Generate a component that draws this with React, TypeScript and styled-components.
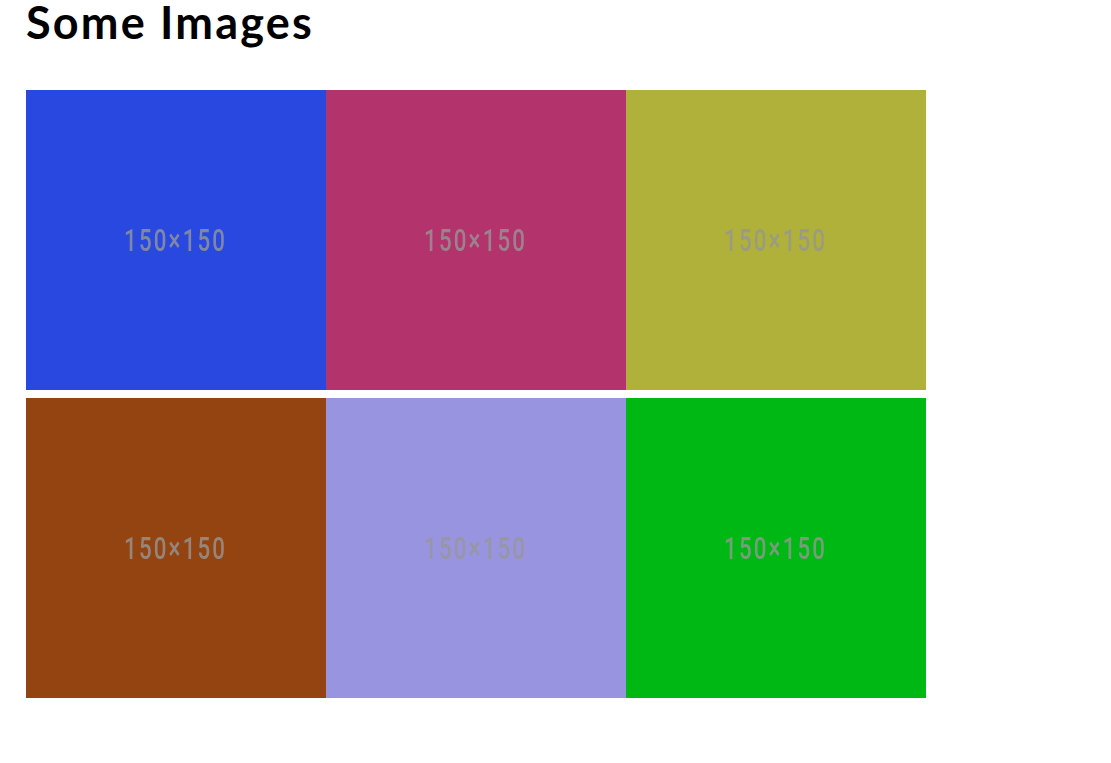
import React from "react";
import styled, { createGlobalStyle } from "styled-components";

const Global = createGlobalStyle`
  html, body { margin: 0; padding: 0; background: #ffffff; }
  body { font-family: "Lato", "DejaVu Sans", sans-serif; }
`;

const Page = styled.main`
  padding: 0 26px;
`;

const Title = styled.h1`
  margin: 0 0 46px;
  font-family: "Lato", "DejaVu Sans", sans-serif;
  font-weight: 700;
  font-size: 45px;
  line-height: 44px;
  letter-spacing: 2.2px;
  color: #000;
`;

const Gallery = styled.div`
  display: grid;
  grid-template-columns: repeat(3, 300px);
  grid-auto-rows: 300px;
  row-gap: 8px;
`;

const Tile = styled.div<{ $bg: string }>`
  background: ${(p) => p.$bg};
  display: flex;
  align-items: center;
  justify-content: center;
`;

const Label = styled.span`
  font-family: "Roboto", "Liberation Sans", sans-serif;
  font-size: 31px;
  font-weight: 500;
  letter-spacing: 3px;
  color: rgba(150, 150, 150, 0.8);
  transform: scaleX(0.72);
  filter: blur(0.4px);
  margin-top: 0;
  user-select: none;
`;

const colors = ["#2948DF", "#B3336C", "#AFB13A", "#934411", "#9994E0", "#00B814"];

export default function App() {
  return (
    <>
      <Global />
      <Page>
        <Title>Some Images</Title>
        <Gallery>
          {colors.map((c) => (
            <Tile key={c} $bg={c}>
              <Label>150×150</Label>
            </Tile>
          ))}
        </Gallery>
      </Page>
    </>
  );
}
